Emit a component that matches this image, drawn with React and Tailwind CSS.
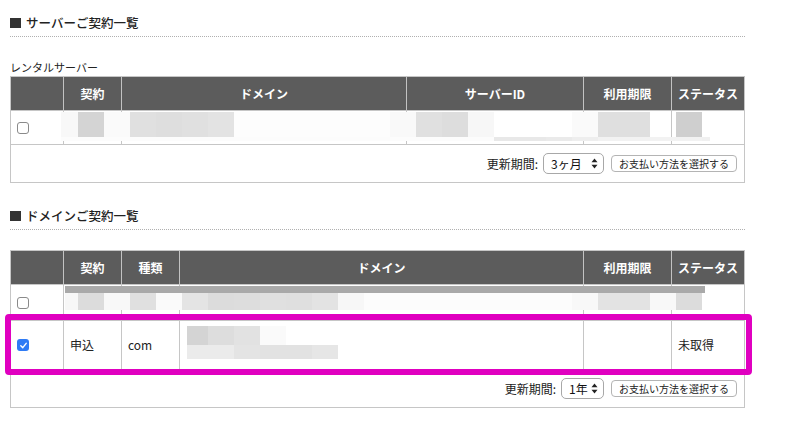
import React from "react";

const FONT = { fontFamily: '"Noto Sans CJK JP", "Noto Sans", sans-serif' };

function Rects({ rects }) {
  return (
    <svg className="absolute left-0 top-0 pointer-events-none" width="787" height="425">
      {rects.map((r, i) => (
        <rect key={i} x={r[0]} y={r[1]} width={r[2] - r[0]} height={r[3] - r[1]} fill={r[4]} />
      ))}
    </svg>
  );
}

const serverRects = [
  [61, 112, 78, 137, "#f8f8f8"],
  [78, 112, 104, 137, "#d4d4d4"],
  [104, 112, 130, 137, "#fafafa"],
  [130, 112, 156, 137, "#e0e0e0"],
  [156, 112, 182, 137, "#dedede"],
  [182, 112, 208, 137, "#e0e0e0"],
  [208, 112, 234, 137, "#e3e3e3"],
  [234, 112, 390, 137, "#fdfdfd"],
  [390, 112, 416, 137, "#f9f9f9"],
  [416, 112, 442, 137, "#e0e0e0"],
  [442, 112, 468, 137, "#dddddd"],
  [468, 112, 494, 137, "#f7f7f7"],
  [572, 112, 598, 137, "#fafafa"],
  [598, 112, 624, 137, "#dfdfdf"],
  [624, 112, 650, 137, "#dfdfdf"],
  [676, 112, 702, 137, "#cfcfcf"],
  [61, 137, 494, 141, "#fcfcfc"],
  [494, 137, 546, 141, "#e8e8e8"],
  [546, 137, 572, 141, "#eaeaea"],
  [572, 137, 598, 141, "#eeeeee"],
  [598, 137, 702, 141, "#f2f2f2"],
  [702, 137, 710, 141, "#f0f0f0"],
];

const domainRects = [
  [65, 286, 705, 293, "#a9a9a9"],
  [65, 293, 78, 310, "#f7f7f7"],
  [78, 293, 104, 310, "#dcdcdc"],
  [104, 293, 130, 310, "#f8f8f8"],
  [130, 293, 156, 310, "#e0e0e0"],
  [156, 293, 182, 310, "#fafafa"],
  [182, 293, 208, 310, "#e4e4e4"],
  [208, 293, 234, 310, "#dcdcdc"],
  [234, 293, 260, 310, "#dddddd"],
  [260, 293, 286, 310, "#e0e0e0"],
  [286, 293, 312, 310, "#dfdfdf"],
  [312, 293, 338, 310, "#e3e3e3"],
  [338, 293, 364, 310, "#f7f7f7"],
  [364, 293, 572, 310, "#fcfcfc"],
  [572, 293, 598, 310, "#f8f8f8"],
  [598, 293, 624, 310, "#e3e3e3"],
  [624, 293, 650, 310, "#e3e3e3"],
  [650, 293, 676, 310, "#f8f8f8"],
  [676, 293, 702, 310, "#dcdcdc"],
  [187, 326, 208, 345, "#d4d4d4"],
  [208, 326, 234, 345, "#dddddd"],
  [234, 326, 260, 345, "#e2e2e2"],
  [260, 326, 286, 345, "#fafafa"],
  [187, 345, 234, 359, "#ebebeb"],
  [234, 345, 260, 359, "#e4e4e4"],
  [260, 345, 312, 359, "#e2e2e2"],
  [312, 345, 338, 359, "#e6e6e6"],
];

function Title({ children, className }) {
  return (
    <div className={className}>
      <div className="flex items-center h-[16px] gap-[5px]">
        <div className="w-[11px] h-[10px] bg-[#333333]" />
        <span className="text-[12.5px] font-medium text-[#222] leading-none">{children}</span>
      </div>
      <div className="mt-[5px] w-[735px] border-t border-dotted border-[#b0b0b0]" />
    </div>
  );
}

function Checkbox({ checked }) {
  if (checked) {
    return (
      <div className="w-[12px] h-[12px] rounded-[3px] bg-[#2f7bf5] flex items-center justify-center">
        <svg width="9" height="9" viewBox="0 0 10 10">
          <path d="M2 5.2 L4.2 7.4 L8 2.6" fill="none" stroke="white" strokeWidth="1.6" strokeLinecap="round" strokeLinejoin="round" />
        </svg>
      </div>
    );
  }
  return <div className="w-[12px] h-[12px] rounded-[3px] border border-[#8a8a8a] bg-white" />;
}

function Arrows() {
  return (
    <svg width="7" height="11" viewBox="0 0 7 11">
      <path d="M3.5 0.5 L6.5 4.2 L0.5 4.2 Z" fill="#222" />
      <path d="M3.5 10.5 L6.5 6.8 L0.5 6.8 Z" fill="#222" />
    </svg>
  );
}

function Footer({ value, selectW }) {
  return (
    <div className="h-[37px] flex items-center justify-end pr-[7px]">
      <span className="text-[12px] text-[#222] leading-none mr-[5px]">更新期間:</span>
      <div
        className={`h-[21px] ${selectW} border border-[#a8a8a8] rounded-[5px] bg-white flex items-center justify-between pl-[7px] pr-[5px]`}
      >
        <span className="text-[12px] text-[#111] leading-none">{value}</span>
        <Arrows />
      </div>
      <div className="ml-[7px] h-[17px] w-[126px] border border-[#b4b4b4] rounded-[4px] bg-white flex items-center justify-center">
        <span className="text-[10px] text-[#222] leading-none">お支払い方法を選択する</span>
      </div>
    </div>
  );
}

function HeadCell({ w, children, first }) {
  return (
    <div
      className={`${w} h-full flex items-center justify-center text-white font-bold text-[12px] ${first ? "" : "border-l border-[#c2c2c2]"}`}
    >
      {children}
    </div>
  );
}

function BodyCell({ w, children, first, center }) {
  return (
    <div
      className={`${w} h-full flex items-center ${center ? "justify-center" : "pl-[6px]"} text-[12px] text-[#222] ${first ? "" : "border-l border-[#c6c6c6]"}`}
    >
      {children}
    </div>
  );
}

export default function App() {
  return (
    <div className="relative w-[787px] h-[425px] bg-white overflow-hidden pl-[10px]" style={FONT}>
      <Title className="pt-[15px]">サーバーご契約一覧</Title>

      <div className="mt-[22px] h-[16px] flex items-center text-[11px] text-[#222] leading-none">レンタルサーバー</div>

      <div className="mt-[1px] w-[735px] border border-[#c6c6c6]">
        <div className="h-[34px] flex bg-[#5c5c5c] border-b border-[#c6c6c6]">
          <HeadCell w="w-[52px]" first />
          <HeadCell w="w-[58px]">契約</HeadCell>
          <HeadCell w="w-[285px]">ドメイン</HeadCell>
          <HeadCell w="w-[177px]">サーバーID</HeadCell>
          <HeadCell w="w-[88px]">利用期限</HeadCell>
          <HeadCell w="w-[73px]">ステータス</HeadCell>
        </div>
        <div className="h-[34px] flex border-b border-[#c6c6c6]">
          <BodyCell w="w-[52px]" first>
            <Checkbox />
          </BodyCell>
          <BodyCell w="w-[58px]" />
          <BodyCell w="w-[285px]" />
          <BodyCell w="w-[177px]" />
          <BodyCell w="w-[88px]" />
          <BodyCell w="w-[73px]" />
        </div>
        <Footer value="3ヶ月" selectW="w-[61px]" />
      </div>

      <Title className="mt-[25px]">ドメインご契約一覧</Title>

      <div className="mt-[20px] w-[735px] border border-[#c6c6c6]">
        <div className="h-[34px] flex bg-[#5c5c5c] border-b border-[#c6c6c6]">
          <HeadCell w="w-[52px]" first />
          <HeadCell w="w-[58px]">契約</HeadCell>
          <HeadCell w="w-[58px]">種類</HeadCell>
          <HeadCell w="w-[404px]">ドメイン</HeadCell>
          <HeadCell w="w-[88px]">利用期限</HeadCell>
          <HeadCell w="w-[73px]">ステータス</HeadCell>
        </div>
        <div className="h-[36px] flex border-b border-[#c6c6c6]">
          <BodyCell w="w-[52px]" first>
            <Checkbox />
          </BodyCell>
          <BodyCell w="w-[58px]" />
          <BodyCell w="w-[58px]" />
          <BodyCell w="w-[404px]" />
          <BodyCell w="w-[88px]" />
          <BodyCell w="w-[73px]" />
        </div>
        <div className="h-[49px] flex border-b border-[#c6c6c6]">
          <BodyCell w="w-[52px]" first>
            <Checkbox checked />
          </BodyCell>
          <BodyCell w="w-[58px]">申込</BodyCell>
          <BodyCell w="w-[58px]">com</BodyCell>
          <BodyCell w="w-[404px]" />
          <BodyCell w="w-[88px]" />
          <BodyCell w="w-[73px]">未取得</BodyCell>
        </div>
        <Footer value="1年" selectW="w-[43px]" />
      </div>

      <Rects rects={[...serverRects, ...domainRects]} />

      <div className="absolute left-[5px] top-[314px] w-[747px] h-[61px] border-[6px] border-[#e000c0] rounded-[4px] pointer-events-none" />
    </div>
  );
}
